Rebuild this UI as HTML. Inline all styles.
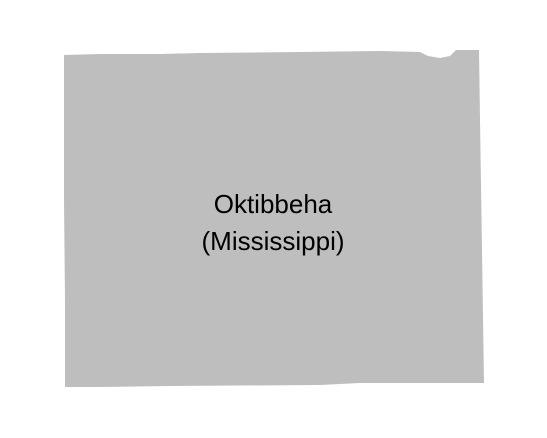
<!DOCTYPE html>
<html><head><style>
html,body{margin:0;padding:0;background:#fff;width:547px;height:438px;overflow:hidden}
svg{position:absolute;left:0;top:0}
</style></head><body>
<svg width="547" height="438" viewBox="0 0 547 438">
<path d="M64,55 L100,54 L160,54 L200,53 L300,52 L380,51 L420,52 L428,56 L440,58 L450,56 L456,50 L479,50 L480,120 L482,250 L484,383 L360,383 L320,385 L170,386 L100,387 L65,387 L65,300 L64,200 Z" fill="#bebebe"/>
<text x="273" y="213" font-family="Liberation Sans, sans-serif" font-size="26" text-anchor="middle" fill="#000">Oktibbeha</text>
<text x="273" y="250" font-family="Liberation Sans, sans-serif" font-size="26" text-anchor="middle" fill="#000">(Mississippi)</text>
</svg>
</body></html>
